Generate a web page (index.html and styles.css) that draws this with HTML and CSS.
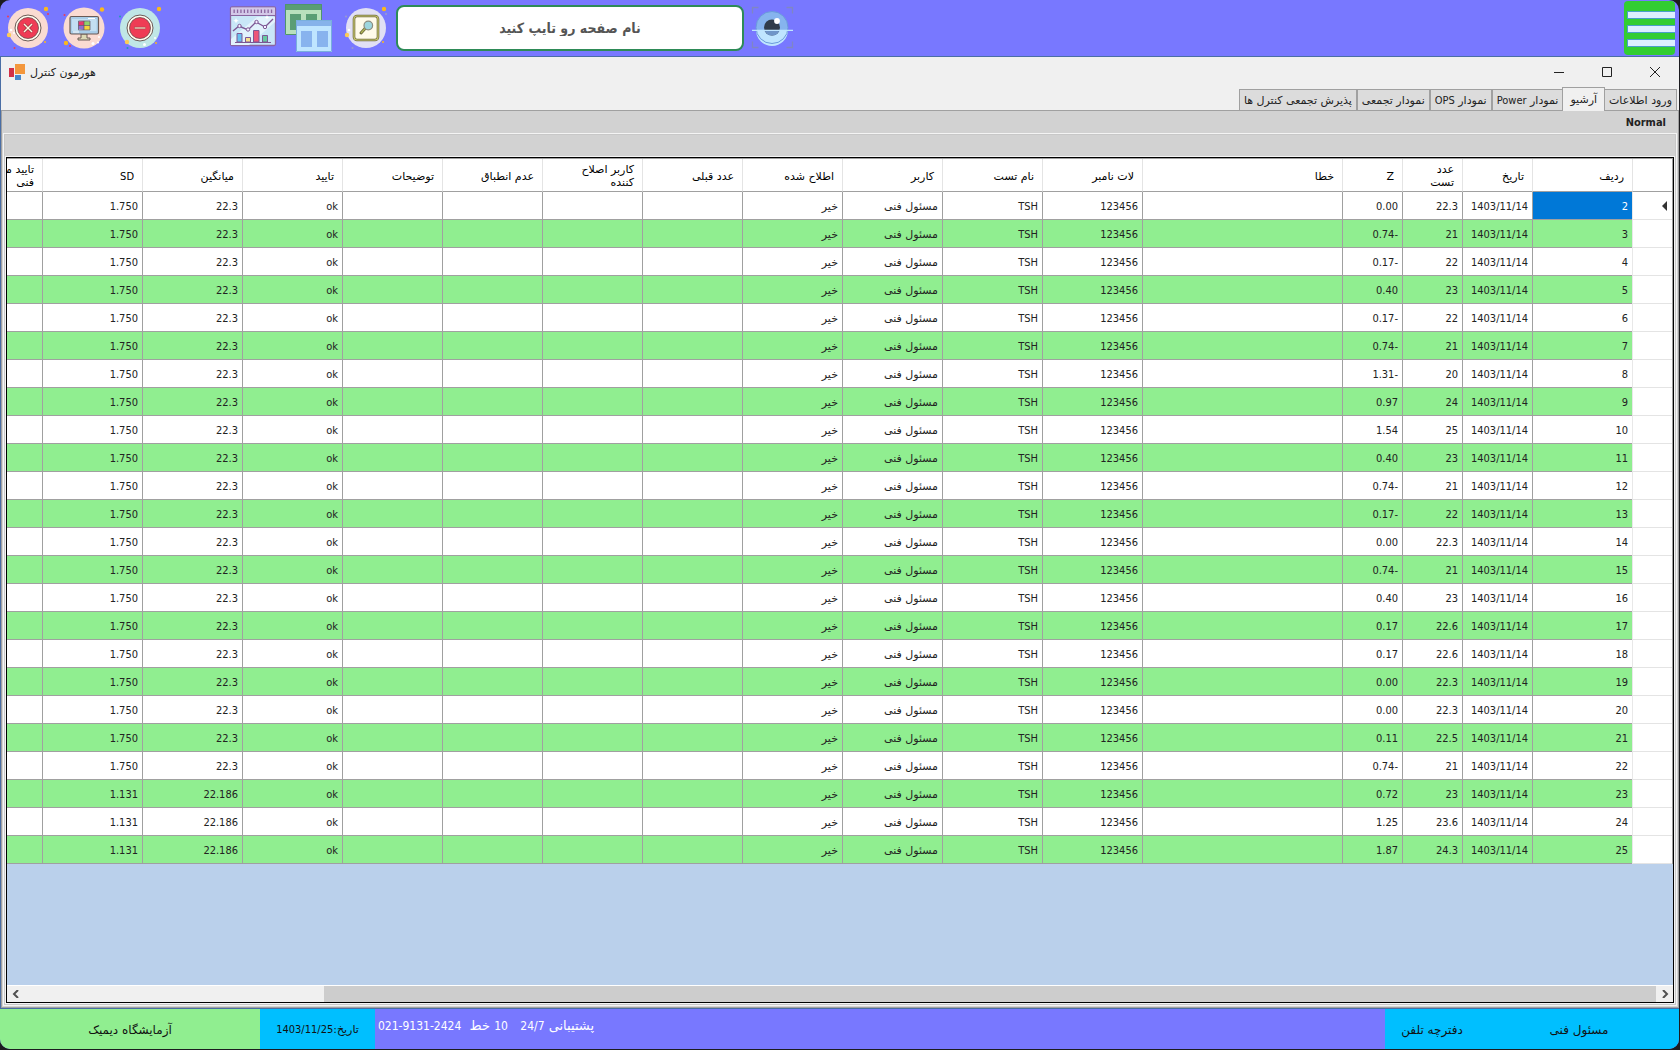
FILE: index.html
```
<!DOCTYPE html>
<html lang="fa">
<head>
<meta charset="utf-8">
<title>هورمون کنترل</title>
<link rel="stylesheet" href="styles.css">
</head>
<body>
<div class="app">
  <header class="topbar">
    <button class="tool" aria-label="خروج"><svg viewBox="0 0 56 56">
      <circle cx="28" cy="28" r="20" fill="#fadbd2"/>
      <circle cx="28" cy="28" r="13" fill="#fffdf0" stroke="#6b5a55" stroke-width="1"/>
      <circle cx="28" cy="28" r="10.5" fill="#ef3c55" stroke="#6b4a4a" stroke-width=".8"/>
      <path d="M24 24l8 8M32 24l-8 8" stroke="#8a3038" stroke-width="2.6"/><path d="M24 24l8 8M32 24l-8 8" stroke="#fff6e0" stroke-width="1.5"/>
      <g fill="#fbb91c"><circle cx="46" cy="9" r="2.2"/><circle cx="45" cy="42" r="1"/></g><circle cx="9" cy="35" r="2.2" fill="#fccb55"/>
      <g fill="#ef3c55"><circle cx="48" cy="14" r="1"/><circle cx="8" cy="16.500" r="1"/><circle cx="14.500" cy="48" r="1"/></g>
      <g fill="#fff"><circle cx="11" cy="30" r="1.300"/><circle cx="14" cy="33" r="1"/></g></svg></button>
    <button class="tool" aria-label="دسکتاپ"><svg viewBox="0 0 56 56">
      <circle cx="28" cy="28" r="20.500" fill="#fadbd2"/>
      <path d="M25 34h6v4h3v2H22v-2h3z" fill="#dcd9b4" stroke="#6b5a55"/>
      <rect x="14" y="16.500" width="28.500" height="17.500" rx="1.500" fill="#a9cde8" stroke="#6b5a55" stroke-width="1.200"/>
      <rect x="16" y="19" width="24.500" height="12" fill="#c3dff2"/>
      <path d="M22.500 21.500l5.500-.5v4.500h-5.500z" fill="#e8366f"/><path d="M28 21l6 .5v4h-6z" fill="#8fd16c"/><path d="M22.500 25.500H28v4.500l-5.500-1z" fill="#8f6fd0"/><path d="M28 25.500h6V30h-6z" fill="#f5d43c"/>
      <path d="M22.500 21h11.500v9H22.500zM28 21v9M22.500 25.500H34" fill="none" stroke="#5d5160" stroke-width=".7"/>
      <path d="M32 18.500h7M17 32h6" stroke="#fff" stroke-width="1"/>
      <g fill="#fbb91c"><circle cx="46" cy="9.500" r="2.200"/><circle cx="10" cy="43" r="2.200"/></g>
      <g fill="#ef3c55"><circle cx="8.500" cy="15" r="1"/><circle cx="14" cy="46" r="1"/></g>
      <g fill="#fff"><circle cx="37" cy="43.500" r="1.500"/><circle cx="43" cy="37" r="1"/><circle cx="42" cy="42.500" r="1"/></g></svg></button>
    <button class="tool" aria-label="کوچک کردن"><svg viewBox="0 0 56 56">
      <circle cx="28" cy="28" r="20" fill="#c0e7e6"/>
      <circle cx="28" cy="28" r="13" fill="#fffdf0" stroke="#6b5a55"/>
      <circle cx="28" cy="28" r="10.500" fill="#ef3c55" stroke="#6b4a4a" stroke-width=".8"/>
      <rect x="22.500" y="27" width="11" height="2" fill="#e8b9a8" stroke="#8a4a4a" stroke-width=".4"/>
      <g fill="#fbb91c"><circle cx="47" cy="9" r="2.200"/><circle cx="44" cy="43" r="1"/></g><circle cx="15" cy="42" r="2.200" fill="#fccb55"/>
      <g fill="#1f9fb0"><circle cx="8" cy="16.500" r="1"/><circle cx="15.500" cy="48" r="1"/></g>
      <g fill="#fff"><circle cx="32.500" cy="44.500" r="1.500"/><circle cx="43" cy="38" r="1"/></g></svg></button>
    <span class="spacer"></span>
    <button class="tool" aria-label="نمودار"><svg viewBox="0 0 56 56">
      <rect x="6.500" y="7" width="45" height="38.500" rx="1.500" fill="#c9e6f7" stroke="#8a65a0" stroke-width="1.300"/>
      <path d="M7 39L33 17h18v5L25 45H7z" fill="#e2f3fc"/>
      <rect x="7" y="7.500" width="44" height="8" fill="#d3c8e8"/>
      <path d="M7 15.500h44" stroke="#8a65a0" stroke-width="1.200"/>
      <path d="M9.500 11.300h39" stroke="#8a65a0" stroke-width="3.600" stroke-dasharray="1.300 2.100"/>
      <g stroke="#7d5794" stroke-width="1"><path d="M13 33.500h5V42h-5z" fill="#69c1ee"/><path d="M21.500 37.500h5V42h-5z" fill="#f8e08c"/><path d="M29.500 30.500H35V42h-5.500z" fill="#ee5578"/><path d="M38.500 35.500h5V42h-5z" fill="#67c9a0"/><path d="M11 42.500h36"/></g>
      <path d="M9 31l6-5 9 4 8-8 9 5 8-8" fill="none" stroke="#7d5794" stroke-width="1.400"/>
      <g fill="#f4f0ff" stroke="#7d5794"><circle cx="15.500" cy="26" r="1.700"/><circle cx="24" cy="29.500" r="1.700"/><circle cx="32.500" cy="22" r="1.700"/><circle cx="41" cy="27" r="1.700"/></g>
      <path d="M12 18l.8 2 2 .8-2 .8-.8 2-.8-2-2-.8 2-.8zM43 15l.7 1.700 1.700.7-1.700.7-.7 1.700-.7-1.700-1.700-.7 1.700-.7z" fill="#fff"/></svg></button>
    <button class="tool" aria-label="پنجره ها"><svg viewBox="0 0 56 56">
      <path d="M5 4h37v31H5z" fill="#b8e0bd"/><path d="M5 4h37v6H5z" fill="#5a9d75"/><path d="M10 14h11v16H10zM26 14h11v16H26z" fill="#5a9d75"/><path d="M5.500 4.500h36v30h-36z" fill="none" stroke="#4f946d"/>
      <path d="M16 20h36v32H16z" fill="#bfe5ff"/><path d="M16 20h36v6H16z" fill="#86b2ea"/><path d="M21 31h11v16H21zM37 31h11v16H37z" fill="#88b3ee"/><path d="M16.500 20.500h35v31h-35z" fill="none" stroke="#79aedd"/></svg></button>
    <button class="tool" aria-label="جستجو"><svg viewBox="0 0 56 56">
      <circle cx="30" cy="28" r="20" fill="#e1e0f4"/>
      <rect x="18" y="16" width="24" height="24" rx="3" fill="#fffbea" stroke="#6f6a3c" stroke-width="2.600"/><rect x="18" y="16" width="24" height="24" rx="3" fill="none" stroke="#c6c66e" stroke-width="1.200"/>
      <path d="M30 27.500l-5 5.500" stroke="#6b6a3c" stroke-width="3" stroke-linecap="round"/><path d="M30 27.500l-5 5.500" stroke="#b4b859" stroke-width="1.200"/>
      <circle cx="32.300" cy="25.500" r="4.300" fill="#9dd6de" stroke="#8a8c80" stroke-width="1.200"/>
      <g fill="#fbb91c"><circle cx="48" cy="9" r="2.200"/><circle cx="47" cy="42" r="1"/></g><circle cx="11" cy="35" r="2.200" fill="#fccb55"/>
      <g fill="#9a9ccc"><circle cx="10" cy="16.500" r="1"/><circle cx="50" cy="14" r="1"/><circle cx="16.500" cy="48" r="1"/></g><circle cx="13" cy="30" r="1.300" fill="#fff"/></svg></button>
    <input class="search" type="text" dir="rtl" aria-label="نام صفحه" placeholder="نام صفحه رو تایپ کنید">
    <button class="tool" aria-label="نمایش"><svg viewBox="0 0 56 56">
      <path d="M8.500 13.500v-6h6M42.500 7.500h6v6M8.500 41.500v6h6M42.500 47.500h6v-6" fill="none" stroke="#7f86c4" stroke-width="1.300"/>
      <circle cx="28" cy="27.500" r="16" fill="#86b4ee"/><path d="M12 30a16 16 0 0 0 32 0z" fill="#bfe5ff"/><circle cx="28" cy="27.500" r="16" fill="none" stroke="#6a9bdc"/>
      <circle cx="28" cy="27.500" r="8" fill="#303c4b"/><path d="M20.400 30a8 8 0 0 0 15.200 0z" fill="#6f95c8"/><circle cx="33" cy="21" r="2.900" fill="#fff"/>
      <path d="M8 30.300h41" stroke="#bfe5ff" stroke-width="1.300"/></svg></button>
    <button class="menu" aria-label="منو"><span></span><span></span><span></span></button>
  </header>

  <main class="window">
    <div class="titlebar">
      <svg class="appicon" viewBox="0 0 16 16"><path d="M6 0h10v10H6z" fill="#f3973d"/><path d="M0 4h5v9H0z" fill="#d13048"/><path d="M6 11h6v5H6z" fill="#4688cc"/></svg>
      <h1 class="fa" dir="rtl">هورمون کنترل</h1>
      <div class="controls">
        <button aria-label="کمینه"><svg viewBox="0 0 10 10"><path d="M0 5.500h10"/></svg></button>
        <button aria-label="بیشینه"><svg viewBox="0 0 10 10"><path d="M.5.5h9v9h-9z"/></svg></button>
        <button aria-label="بستن"><svg viewBox="0 0 10 10"><path d="M0 0l10 10M10 0L0 10"/></svg></button>
      </div>
    </div>
    <nav class="tabs fa" dir="rtl">
      <button>ورود اطلاعات</button><button class="active">آرشیو</button><button>نمودار <span class="latin">Power</span></button><button>نمودار <span class="latin">OPS</span></button><button>نمودار تجمعی</button><button>پذیرش تجمعی کنترل ها</button>
    </nav>
    <section class="page">
      <h2>Normal</h2>
      <div class="frame">
        <div class="toolstrip"></div>
        <div class="grid">
          <div class="viewport" dir="rtl">
            <table>
              <colgroup><col class="w-head"><col class="w-std"><col class="w-date"><col class="w-num"><col class="w-num"><col class="w-err"><col class="w-std" span="12"></colgroup>
              <thead class="fa"><tr><th></th><th>ردیف</th><th>تاریخ</th><th>عدد<br>تست</th><th>Z</th><th>خطا</th><th>لات نامبر</th><th>نام تست</th><th>کاربر</th><th>اطلاح شده</th><th>عدد قبلی</th><th>کاربر اصلاح<br>کننده</th><th>عدم انطباق</th><th>توضیحات</th><th>تایید</th><th>میانگین</th><th><span class="latin">SD</span></th><th>تایید مسئول<br>فنی</th></tr></thead>
              <tbody id="rows"></tbody>
            </table>
          </div>
          <div class="scrollbar">
            <button aria-label="چپ"><svg viewBox="0 0 8 8"><path d="M6 0L2 4l4 4"/></svg></button>
            <div class="track"><div class="thumb"></div></div>
            <button aria-label="راست"><svg viewBox="0 0 8 8"><path d="M2 0l4 4-4 4"/></svg></button>
          </div>
        </div>
      </div>
    </section>
  </main>

  <footer class="status fa">
    <div class="lab" dir="rtl">آزمایشگاه دیمیک</div>
    <div class="date" dir="rtl">تاریخ:<span class="latin">1403/11/25</span></div>
    <div class="support"><span dir="rtl">پشتیبانی <span class="latin">24/7</span> &nbsp; <span class="latin">10</span> خط &nbsp;<bdi class="latin" dir="ltr">021-9131-2424</bdi></span></div>
    <div class="user"><a href="#" dir="rtl">دفترچه تلفن</a><span dir="rtl">مسئول فنی</span></div>
  </footer>
</div>
<script src="grid.js"></script>
</body>
</html>
```
FILE: grid.js
```
// Archive rows: test value and Z score; row numbers start at 2.
const results = [
  ["22.3", "0.00"], ["21", "-0.74"], ["22", "-0.17"], ["23", "0.40"],
  ["22", "-0.17"], ["21", "-0.74"], ["20", "-1.31"], ["24", "0.97"],
  ["25", "1.54"], ["23", "0.40"], ["21", "-0.74"], ["22", "-0.17"],
  ["22.3", "0.00"], ["21", "-0.74"], ["23", "0.40"], ["22.6", "0.17"],
  ["22.6", "0.17"], ["22.3", "0.00"], ["22.3", "0.00"], ["22.5", "0.11"],
  ["21", "-0.74"], ["23", "0.72"], ["23.6", "1.25"], ["24.3", "1.87"]
];
const persian = /[\u0600-\u06ff]/;
document.getElementById("rows").innerHTML = results.map(([value, z], i) => {
  const [mean, sd] = i < 21 ? ["22.3", "1.750"] : ["22.186", "1.131"];
  const cells = [i + 2, "1403/11/14", value, z, "", "123456", "TSH", "مسئول فنی",
    "خیر", "", "", "", "", "ok", mean, sd, ""];
  const cell = (text, n) => {
    const name = !i && !n ? "selected" : persian.test(text) ? "fa" : "";
    return `<td${name && ` class="${name}"`}>${text}</td>`;
  };
  return `<tr><th scope="row">${i ? "" : '<i class="marker"></i>'}</th>` +
    cells.map(cell).join("") + "</tr>";
}).join("");
```
FILE: styles.css
```
* { box-sizing: border-box; }
body {
  margin: 0;
  padding: 0 1px 1px 0;
  min-height: 100vh;
  display: flex;
  background: #1c1c20;
  font: 11px/13px "DejaVu Sans Condensed", "DejaVu Sans", sans-serif;
  color: #222;
}
button { border: 0; padding: 0; background: none; font: inherit; color: inherit; }
svg { display: block; }
h1, h2 { margin: 0; font-size: 11px; }
.fa { font-family: "DejaVu Sans", sans-serif; }
.latin { font-family: "DejaVu Sans Condensed", "DejaVu Sans", sans-serif; }
.app {
  flex: 1;
  min-width: 0;
  display: flex;
  flex-direction: column;
  border-radius: 10px;
  overflow: hidden;
  background: #7878ff;
}

/* top bar */
.topbar { display: flex; align-items: center; height: 56px; }
.tool { flex: none; width: 56px; height: 56px; }
.tool svg { width: 56px; height: 56px; }
.spacer { width: 56px; }
.search {
  width: 348px;
  height: 46px;
  margin: 0 0 0 4px;
  padding: 0 16px;
  border: 2px solid #2e8b57;
  border-radius: 8px;
  background: #fff;
  font: bold 14px/20px "DejaVu Sans Condensed", "DejaVu Sans", sans-serif;
  text-align: center;
}
.search::placeholder { color: #555; opacity: 1; }
.menu {
  width: 51px;
  height: 54px;
  margin: 0 4px 0 auto;
  padding: 2px 0 0 3px;
  border-radius: 4px;
  background: #32cd32;
  display: flex;
  flex-direction: column;
  justify-content: center;
  gap: 6px;
}
.menu span { height: 8px; border: 1px solid #4a9fc8; border-right: 0; background: #dcefff; }

/* window */
.window {
  flex: 1;
  display: flex;
  flex-direction: column;
  border: solid #4a6ea5;
  border-width: 1px 0 1px 1px;
  background: #f0f0f0;
}
.titlebar { display: flex; align-items: center; height: 30px; padding-left: 8px; }
.appicon { width: 16px; height: 16px; margin-right: 5px; }
.titlebar h1 { font-weight: normal; }
.controls { display: flex; margin-left: auto; }
.controls button { width: 48px; height: 30px; display: grid; place-items: center; }
.controls svg { width: 10px; height: 10px; fill: none; stroke: #222; overflow: visible; }
.tabs { display: flex; align-items: flex-end; height: 23px; padding-right: 2px; }
.tabs button {
  height: 21px;
  padding: 0 4px;
  border: 1px solid #a0a0a0;
  border-bottom: 0;
  background: #dcdcdc;
}
.tabs .active { height: 24px; padding: 0 7px; margin: 0 -1px -1px; background: #f0f0f0; position: relative; }
.page {
  flex: 1;
  display: flex;
  flex-direction: column;
  padding: 0 1px 1px;
  border: 1px solid #a0a0a0;
  background: #d2d2d2;
}
.page h2 { height: 22px; padding-right: 11px; line-height: 24px; text-align: right; }
.frame {
  flex: 1;
  display: flex;
  flex-direction: column;
  border: 1px solid #f4f4f4;
  outline: 1px solid #c8c8c8;
  outline-offset: -2px;
  padding: 1px;
}
.toolstrip { height: 22px; border-bottom: 1px solid #c0c0c0; }
.grid {
  flex: 1;
  min-width: 0;
  display: flex;
  flex-direction: column;
  margin: 0 1px 1px;
  border: 1px solid #000;
  box-shadow: 0 0 0 1px #f4f4f4;
  background: #bad0eb;
}
.viewport { flex: 1; min-width: 0; width: 100%; overflow: hidden; display: flex; border: solid #a0a0a0; border-width: 1px 0 0; }
table { flex: none; width: 1731px; table-layout: fixed; border-collapse: separate; border-spacing: 0; align-self: flex-start; border-right: 1px solid #a0a0a0; background: #fff; }
.w-head { width: 40px; }
.w-std { width: 100px; }
.w-date { width: 70px; }
.w-num { width: 60px; }
.w-err { width: 200px; }
th, td { text-align: right; font-weight: normal; white-space: nowrap; }
thead th { height: 33px; padding: 2px 8px 0; border-left: 1px solid #e4e4e4; border-bottom: 1px solid #a0a0a0; color: #000; }
tbody th { height: 28px; padding: 0 5px; border-left: 1px solid #e8e8e8; border-bottom: 1px solid #e4e4e4; background: #fff; }
td { height: 28px; padding: 2px 4px 0; border-left: 1px solid #a0a0a0; border-bottom: 1px solid #a0a0a0; }
tbody tr:nth-child(even) td { background: #90ee90; }
tbody .selected { background: #0078d7; color: #fff; }
.marker { display: block; width: 5px; height: 10px; border: solid transparent; border-width: 5px 0; border-right: 5px solid #333; }
.scrollbar { display: flex; height: 17px; border-top: 1px solid #fff; background: #f0f0f0; }
.scrollbar button { width: 17px; display: grid; place-items: center; }
.scrollbar svg { width: 8px; height: 8px; fill: none; stroke: #505050; stroke-width: 2; }
.track { flex: 1; display: flex; justify-content: flex-end; }
.thumb { width: 81.6%; background: #cdcdcd; }

/* status bar */
.status { display: flex; height: 40px; font-size: 12px; line-height: 42px; color: #111; }
.lab { width: 260px; background: #90ee90; text-align: center; }
.date { width: 115px; background: #00bfff; text-align: center; font-size: 11px; }
.support { flex: 1; padding-left: 3px; line-height: 34px; font-size: 13px; color: #fff; }
.support .latin { font-size: 12px; }
.user { width: 294px; background: #00bfff; display: flex; }
.user > * { flex: 1; text-align: center; color: inherit; text-decoration: none; }
.user a { flex: 0 0 94px; }
```
